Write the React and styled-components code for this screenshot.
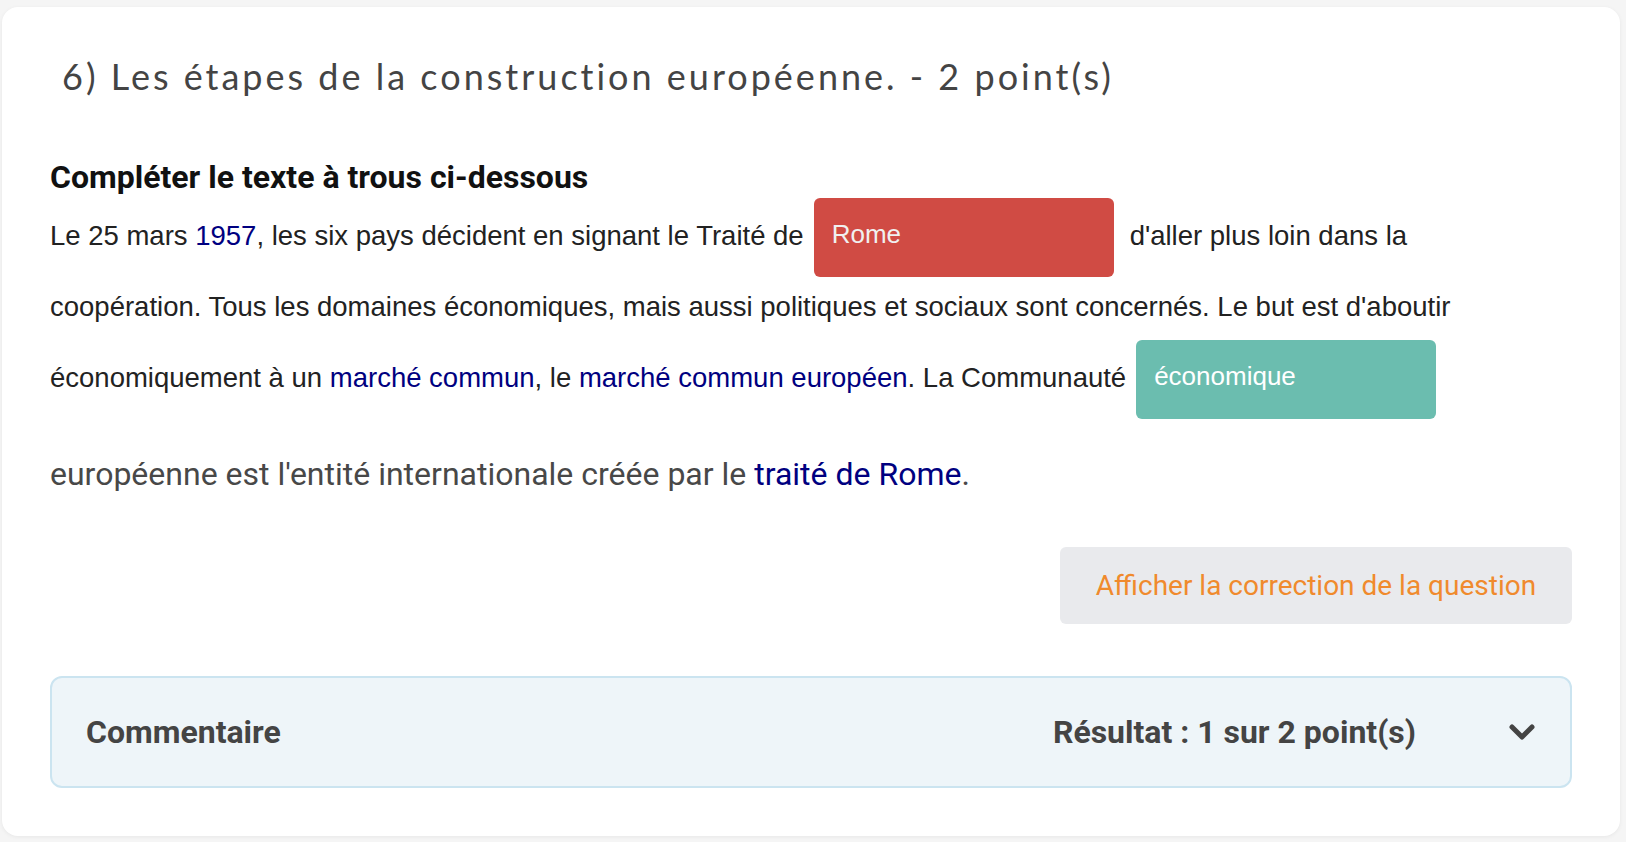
import styled, { createGlobalStyle } from "styled-components";

const GlobalStyle = createGlobalStyle`
  body {
    margin: 0;
    background: #f5f5f5;
    font-family: Roboto, "Liberation Sans", sans-serif;
  }
`;

const Page = styled.div`
  padding: 7px 6px 6px 2px;
`;

const Card = styled.section`
  background: #fff;
  border-radius: 16px;
  box-shadow: 0 1px 4px rgba(0, 0, 0, 0.06);
  padding: 47px 48px 48px 48px;
`;

const Title = styled.h2`
  margin: 0 0 60px 12px;
  font-family: Lato, "Noto Sans", sans-serif;
  font-weight: 400;
  font-size: 36px;
  letter-spacing: 3px;
  color: #444;
`;

const Instruction = styled.h5`
  margin: 0 0 4px;
  font-family: Roboto, sans-serif;
  font-weight: 700;
  font-size: 32px;
  color: #111;
`;

const Holes = styled.p`
  margin: 0;
  font-family: "Liberation Sans", Arial, sans-serif;
  font-size: 27.5px;
  line-height: 71px;
  color: #222;
`;

const Link = styled.a`
  color: #000080;
  text-decoration: none;
`;

const Blank = styled.span`
  display: inline-block;
  box-sizing: border-box;
  width: 300px;
  height: 79px;
  margin: -6px 16px -6px 10px;
  padding: 0 18px;
  border-radius: 6px;
  vertical-align: middle;
  font-size: 26px;
  line-height: 72px;
  color: ${(p) => (p.$ok ? "#fff" : "#f0f0f0")};
  background: ${(p) => (p.$ok ? "#6bbdaf" : "#d04b44")};
`;

const Tail = styled.p`
  margin: 42px 0 0;
  font-family: Roboto, sans-serif;
  font-size: 32px;
  color: #484848;
`;

const Actions = styled.div`
  display: flex;
  justify-content: flex-end;
  margin-top: 54px;
`;

const CorrectionButton = styled.button`
  width: 512px;
  height: 77px;
  border: none;
  border-radius: 6px;
  background: #e9eaed;
  color: #f08a2d;
  font-family: Roboto, sans-serif;
  font-size: 28px;
  cursor: pointer;
`;

const Comment = styled.div`
  display: flex;
  align-items: center;
  height: 112px;
  box-sizing: border-box;
  margin-top: 52px;
  padding: 0 34px;
  border: 2px solid #cbe4f0;
  border-radius: 12px;
  background: #eef5f9;
  color: #444;
  font-family: Roboto, sans-serif;
  font-weight: 700;
  font-size: 32px;
`;

const Grow = styled.span`
  flex: 1;
`;

const Result = styled.span`
  margin-right: 92px;
`;

const Chevron = () => (
  <svg width="28" height="20" viewBox="0 0 28 20">
    <path d="M4 5 L14 15 L24 5" fill="none" stroke="#444" strokeWidth="5" strokeLinecap="round" strokeLinejoin="round" />
  </svg>
);

export default function App() {
  return (
    <Page>
      <GlobalStyle />
      <Card>
        <Title>6) Les étapes de la construction européenne. - 2 point(s)</Title>
        <Instruction>Compléter le texte à trous ci-dessous</Instruction>
        <Holes>
          Le 25 mars <Link>1957</Link>, les six pays décident en signant le Traité de
          <Blank>Rome</Blank>d'aller plus loin dans la
          <br />
          coopération. Tous les domaines économiques, mais aussi politiques et sociaux sont concernés. Le but est d'aboutir
          <br />
          économiquement à un <Link>marché commun</Link>, le <Link>marché commun européen</Link>. La Communauté
          <Blank $ok>économique</Blank>
        </Holes>
        <Tail>
          européenne est l'entité internationale créée par le <Link>traité de Rome</Link>.
        </Tail>
        <Actions>
          <CorrectionButton>Afficher la correction de la question</CorrectionButton>
        </Actions>
        <Comment>
          <Grow>Commentaire</Grow>
          <Result>Résultat : 1 sur 2 point(s)</Result>
          <Chevron />
        </Comment>
      </Card>
    </Page>
  );
}
